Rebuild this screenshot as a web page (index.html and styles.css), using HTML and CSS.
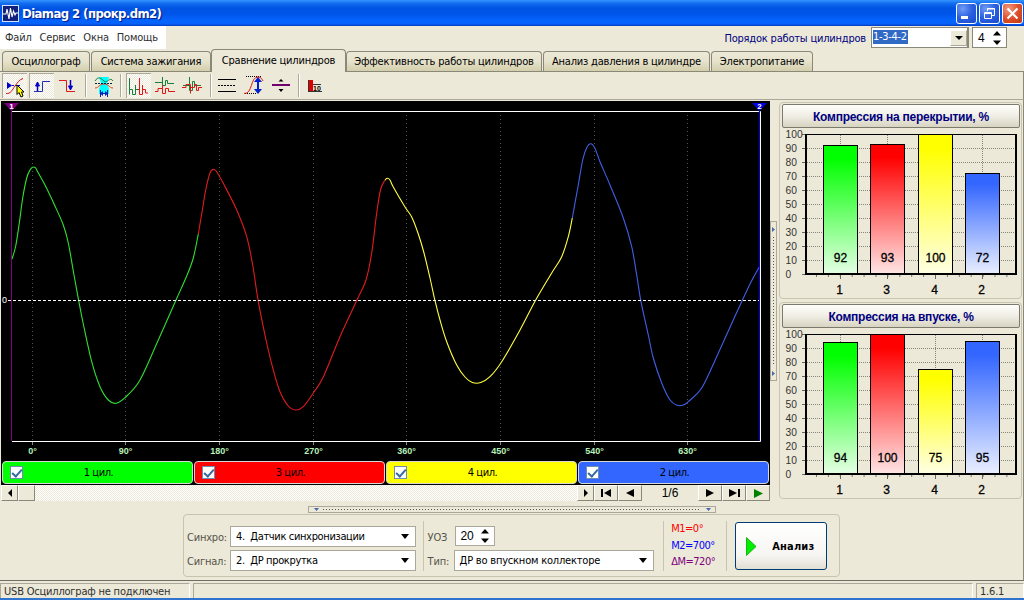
FILE: index.html
```html
<!DOCTYPE html>
<html lang="ru">
<head>
  <meta charset="UTF-8" />
  <title>Diamag 2 (прокр.dm2)</title>
  <link rel="stylesheet" href="styles.css">
</head>
<body>
  <div class="titlebar">
    <svg class="app-icon" width="17" height="17" viewBox="0 0 17 17">
      <rect x="0.5" y="0.5" width="16" height="16" fill="#10207c" stroke="#d8e4ff" />
      <path d="M1 9H4L5 4L7 14L8.500 3L10 12L11.500 6L13 10L14 8H16" fill="none" stroke="#fff" stroke-width="1.100" />
    </svg>
    <span class="title">Diamag 2 (прокр.dm2)</span>
    <div class="win-buttons">
      <div class="win-btn"><svg width="19" height="19"><rect x="4" y="12" width="7" height="3" fill="#fff" /></svg></div>
      <div class="win-btn"><svg width="19" height="19" fill="none" stroke="#fff"><path d="M7.500 7V4.500H14.500V11.500H12M7 5H15" /><path d="M4.500 8.500H11.500V14.500H4.500ZM4 9.500H12" /></svg></div>
      <div class="win-btn close"><svg width="19" height="19"><path d="M4.500 4.500L14.500 14.500M14.500 4.500L4.500 14.500" stroke="#fff" stroke-width="2.200" /></svg></div>
    </div>
  </div>

  <div class="menubar">
    <div class="menu"><span>Файл</span><span>Сервис</span><span>Окна</span><span>Помощь</span></div>
    <div class="order">
      <label>Порядок работы цилиндров</label>
      <div class="order-combo"><span class="selected">1-3-4-2</span><i class="drop"><svg width="8" height="4"><path d="M0 0H8L4 4Z" /></svg></i></div>
      <div class="spin order-spin"><span>4</span><svg width="8" height="14"><path d="M0 4.500L4 0L8 4.500ZM0 9.500H8L4 14Z" /></svg></div>
    </div>
  </div>

  <div class="tabs">
    <div class="tab t1"><span>Осциллограф</span></div>
    <div class="tab t2"><span>Система зажигания</span></div>
    <div class="tab t3 active"><span>Сравнение цилиндров</span></div>
    <div class="tab t4"><span>Эффективность работы цилиндров</span></div>
    <div class="tab t5"><span>Анализ давления в цилиндре</span></div>
    <div class="tab t6"><span>Электропитание</span></div>
  </div>

  <div class="toolbar">
    <div class="tool on"><svg width="25" height="25" fill="none">
      <path d="M6 11.500H17" stroke="#0000c8" stroke-dasharray="2 1" /><path d="M4 8L9 11.500L4 15Z" fill="#0000c8" />
      <path d="M3 19.500C8 20 9 16 12 12S16 6 20 4.500" stroke="#d01010" />
      <path d="M14 11V20.500L16 18.500L18 23L20 22L18.500 18H21Z" fill="#ffff00" stroke="#000" /></svg></div>
    <div class="tool on"><svg width="25" height="25" fill="none" stroke="#0000c8">
      <path d="M4 17.500H12.500V7.500H20" stroke="#2030b0" /><path d="M7.500 17V9" stroke-width="1.500" /><path d="M5.500 12L7.500 8L9.500 12Z" fill="#0000c8" /></svg></div>
    <div class="tool"><svg width="25" height="25" fill="none" stroke="#e01818">
      <path d="M3 7.500H10.500V18.500H19" /><path d="M14.500 7V15" stroke="#0000c8" stroke-width="1.500" /><path d="M12.500 13L14.500 17L16.500 13Z" fill="#0000c8" stroke="#0000c8" /></svg></div>
    <i class="sep"></i>
    <div class="tool"><svg width="25" height="25" fill="none">
      <path d="M7 4H17L15 10L17 16V21H7V16L9 10Z" fill="#00ffff" />
      <path d="M3 8C6 3 9 5 12 8S18 3 21 8" stroke="#118050" /><path d="M3 15C7 15 7 11 12 11S17 15 21 15" stroke="#e04020" />
      <path d="M3 10.500H21" stroke="#002040" stroke-dasharray="2 1" />
      <path d="M9 20.500H15" stroke="#0020c0" /><path d="M8.500 17V24M15.500 17V24" stroke="#0020c0" /><path d="M8 20.500L11 18V23ZM16 20.500L13 18V23Z" fill="#0020c0" /></svg></div>
    <i class="sep after-cyan"></i>
    <div class="tool on"><svg width="25" height="25" fill="none">
      <path d="M2.500 20.500V4V15.500H5.500V20.500H8.500V11V15.500H11" stroke="#18803c" /><path d="M11 15.500H12.500V4V20.500H15.500V11V15.500H18.500V19H21" stroke="#e01818" /></svg></div>
    <div class="tool"><svg width="25" height="25" fill="none">
      <path d="M2 9.500H9.500V4V12.500H12.500V7.500H14.500V10.500H21" stroke="#18803c" /><path d="M2 18.500H5V15.500H9.500V12V20.500H12.500V15.500H15.500V18.500H22" stroke="#e01818" /></svg></div>
    <div class="tool"><svg width="25" height="25" fill="none">
      <path d="M3 12.500H9.500V4V17.500H12.500V8.500H14.500V12.500H21" stroke="#18803c" /><path d="M2 14.500H6V11.500H10.500V20.500M11 14.500H14.500V11.500H16.500V17.500H18.500V14.500H22" stroke="#e01818" /></svg></div>
    <i class="sep before-lines"></i>
    <div class="tool"><svg width="25" height="25" fill="none" stroke="#000">
      <path d="M3 6.500H21M3 18.500H21" /><path d="M3 12.500H21" stroke-dasharray="2 1" /></svg></div>
    <div class="tool"><svg width="25" height="25" fill="none">
      <path d="M4 3.500H19M3 20.500H15" stroke="#000" stroke-dasharray="1 1" /><path d="M2 20.500C11 21 8 4 16 4C19 4 20 6 21 8" stroke="#e01818" />
      <path d="M16 7V18" stroke="#0020d0" stroke-width="2" /><path d="M12 9L16 4L20 9ZM12 16H20L16 21Z" fill="#0020d0" /></svg></div>
    <div class="tool"><svg width="25" height="25">
      <path d="M3 12H21" stroke="#700070" stroke-width="2" /><path d="M9.500 8.500L12 6L14.500 8.500ZM9.500 16H14.500L12 19Z" /></svg></div>
    <i class="sep before-ten"></i>
    <div class="tool"><svg width="25" height="25">
      <path d="M6.500 7V19M6 18.500H20M11 11.500H19" stroke="#333" fill="none" /><rect x="7" y="7" width="4" height="11" fill="#e00000" /><text x="11" y="18" font-family="Liberation Sans" font-size="7" font-weight="bold">10</text></svg></div>
  </div>

  <div class="main">
    <div class="scope">
      <svg id="scopePlot" width="769" height="359" viewBox="1 101 769 359"></svg>
      <div class="channels">
        <div class="channel green"><i class="check"></i><span>1 цил.</span></div>
        <div class="channel red"><i class="check"></i><span>3 цил.</span></div>
        <div class="channel yellow"><i class="check"></i><span>4 цил.</span></div>
        <div class="channel blue"><i class="check"></i><span>2 цил.</span></div>
      </div>
      <div class="pager">
        <div class="pbtn arrow"><svg width="4" height="8"><path d="M4 0V8L0 4Z" /></svg></div>
        <div class="pbtn thumb"></div>
        <div class="track"></div>
        <div class="pbtn arrow"><svg width="4" height="8"><path d="M0 0V8L4 4Z" /></svg></div>
        <div class="pbtn"><svg width="11" height="8"><path d="M0 0H2V8H0ZM10 0V8L3 4Z" /></svg></div>
        <div class="pbtn"><svg width="8" height="8"><path d="M8 0V8L0 4Z" /></svg></div>
        <div class="page">1/6</div>
        <div class="pbtn"><svg width="8" height="8"><path d="M0 0V8L8 4Z" /></svg></div>
        <div class="pbtn"><svg width="11" height="8"><path d="M9 0H11V8H9ZM0 0V8L8 4Z" /></svg></div>
        <div class="pbtn"><svg width="9" height="9"><path d="M0 0V9L9 4.500Z" fill="#008000" /></svg></div>
      </div>
    </div>
    <div class="vsplit"><svg width="7" height="160" viewBox="0 0 7 160">
      <rect x="0.500" y="0.500" width="6" height="159" fill="none" stroke="#aca899" />
      <path d="M2 6V11L5 8.500ZM2 150V155L5 152.500Z" fill="#4868b0" /><path d="M3.500 16V143" stroke="#555" stroke-dasharray="1 2" /></svg></div>
    <div class="side">
      <div class="card">
        <div class="card-title">Компрессия на перекрытии, %</div>
        <svg class="bars" data-values="92,93,100,72" width="241" height="168" viewBox="780 128 241 168"></svg>
      </div>
      <div class="card">
        <div class="card-title">Компрессия на впуске, %</div>
        <svg class="bars" data-values="94,100,75,95" width="241" height="168" viewBox="780 128 241 168"></svg>
      </div>
    </div>
  </div>

  <div class="bottom">
    <svg class="hsplit" width="408" height="7" viewBox="0 0 408 7">
      <rect x="0.500" y="0.500" width="407" height="6" fill="none" stroke="#aca899" />
      <path d="M6 2H11L8.500 5ZM398 2H403L400.500 5Z" fill="#4868b0" /><path d="M15 3.500H392" stroke="#555" stroke-dasharray="1 2" /></svg>
    <div class="group">
      <div class="fields sync">
        <div class="row"><label>Синхро:</label><div class="combo"><span>4.&nbsp; Датчик синхронизации</span><svg width="8" height="5"><path d="M0 0H8L4 5Z" /></svg></div></div>
        <div class="row"><label>Сигнал:</label><div class="combo"><span>2.&nbsp; ДР прокрутка</span><svg width="8" height="5"><path d="M0 0H8L4 5Z" /></svg></div></div>
      </div>
      <div class="fields kind">
        <div class="row"><label>УОЗ</label><div class="spin"><span>20</span><svg width="8" height="14"><path d="M0 4.500L4 0L8 4.500ZM0 9.500H8L4 14Z" /></svg></div></div>
        <div class="row"><label>Тип:</label><div class="combo"><span>ДР во впускном коллекторе</span><svg width="8" height="5"><path d="M0 0H8L4 5Z" /></svg></div></div>
      </div>
      <div class="marks">
        <span class="m1">М1=0°</span>
        <span class="m2">М2=700°</span>
        <span class="dm">ΔМ=720°</span>
      </div>
      <div class="analyze"><svg width="11" height="19"><path d="M0.500 0.500V18.500L10 9.500Z" fill="#00f000" stroke="#20b020" /></svg><span>Анализ</span></div>
    </div>
  </div>

  <div class="status">
    <div class="cell c1">USB Осциллограф не подключен</div>
    <div class="cell c2"></div>
    <div class="cell c3">1.6.1</div>
  </div>
  <script src="script.js"></script>
</body>
</html>
```
FILE: styles.css
```css
* {
  box-sizing: border-box;
}

body {
  margin: 0;
  width: 1024px;
  height: 600px;
  overflow: hidden;
  background: #ece9d8;
  font-family: "DejaVu Sans Condensed", "DejaVu Sans", sans-serif;
  font-stretch: condensed;
  font-size: 11px;
  letter-spacing: -0.2px;
  color: #000;
  display: flex;
  flex-direction: column;
  border-bottom: 2px solid #2f74d0;
}

svg {
  display: block;
  flex: none;
  letter-spacing: 0;
}

span, label {
  white-space: nowrap;
}

/* title bar */
.titlebar {
  height: 26px;
  flex: none;
  display: flex;
  align-items: center;
  padding: 0 1px 0 2px;
  background: linear-gradient(#2f8cfa 0, #2f8cfa 1px, #1470f0 3px, #0054e3 8px, #0055ea 14px, #0565ff 21px, #0560f8 24px, #0038b8 26px);
}

.title {
  margin-left: 3px;
  color: #fff;
  font-weight: bold;
  font-size: 13px;
  letter-spacing: -0.58px;
  text-shadow: 1px 1px 1px #0a1883;
}

.win-buttons {
  margin-left: auto;
  display: flex;
  gap: 2px;
}

.win-btn {
  width: 21px;
  height: 21px;
  border: 1px solid #fff;
  border-radius: 3px;
  background: radial-gradient(circle at 30% 25%, #6f9cf5, #2a5fe0 50%, #1c49cc);
}

.win-btn.close {
  background: radial-gradient(circle at 30% 25%, #f09a80, #e0502c 50%, #c03818);
}

/* menu */
.menubar {
  height: 24px;
  flex: none;
  display: flex;
  justify-content: space-between;
}

.menu {
  width: 166px;
  height: 23px;
  padding-left: 5px;
  background: #fff;
  display: flex;
  gap: 8px;
  line-height: 24px;
  color: #303030;
}

.order {
  display: flex;
  padding: 1px 17px 0 0;
}

.order label {
  color: #000080;
  line-height: 23px;
  margin-right: 5px;
}

.order-combo {
  width: 98px;
  height: 21px;
  border: 1px solid #8a8878;
  border-right-width: 2px;
  background: #fff;
  display: flex;
  justify-content: space-between;
  padding: 2px 0 0 1px;
}

.selected {
  height: 14px;
  width: 35px;
  line-height: 14px;
  background: #316ac5;
  color: #fff;
  letter-spacing: -0.3px;
}

.drop {
  width: 17px;
  height: 16px;
  background: #ece9d8;
  border: 1px solid #fff;
  border-right-color: #aca899;
  border-bottom-color: #aca899;
  display: flex;
  align-items: center;
  justify-content: center;
}

.spin {
  width: 40px;
  height: 20px;
  border: 1px solid #aca899;
  background: #fff;
  display: flex;
  align-items: center;
  justify-content: space-between;
  padding: 0 5px;
  font: 12px "Liberation Sans", Arial, sans-serif;
}

.order-spin {
  width: 35px;
  height: 21px;
  margin-left: 3px;
  border-color: #8a8878;
}

/* tabs */
.tabs {
  height: 22px;
  flex: none;
  display: flex;
  align-items: flex-end;
  padding-left: 2px;
  border-bottom: 1px solid #8a8878;
}

.tab {
  height: 20px;
  border: 1px solid #8a8878;
  border-bottom: none;
  border-radius: 4px 4px 0 0;
  background: linear-gradient(#ece9d8, #e6e2cb 50%, #d3ceab);
  text-align: center;
  line-height: 20px;
  margin-right: 1px;
}

.tab.active {
  height: 23px;
  background: #ece9d8;
  margin: 0 0 -1px -1px;
  line-height: 22px;
}

.t1 { width: 88px; }
.t2 { width: 120px; }
.t3 { width: 135px; }
.t4 { width: 196px; }
.t5 { width: 167px; }
.t6 { width: 102px; }

/* toolbar */
.toolbar {
  height: 28px;
  flex: none;
  display: flex;
  padding: 1px 0 0 2px;
  border-right: 1px solid #8a8878;
  border-bottom: 1px solid #aca899;
}

.tool {
  width: 25px;
  height: 25px;
  margin-right: 2px;
}

.tool.on {
  background: repeating-conic-gradient(#fff 0 25%, #ece9d8 0 50%) 0 0 / 2px 2px;
  border-left: 1px solid #aca899;
  border-top: 1px solid #aca899;
}

.sep {
  width: 2px;
  height: 23px;
  margin: 1px 5px 0 2px;
  border-left: 1px solid #aca899;
  border-right: 1px solid #fff;
}

.sep.after-cyan { margin: 1px 4px 0 1px; }
.sep.before-lines { margin: 1px 3px 0 3px; }
.sep.before-ten { margin: 1px 2px 0 2px; }

/* work area */
.main {
  height: 401px;
  flex: none;
  display: flex;
  padding: 1px 0 0 1px;
  border-right: 1px solid #8a8878;
}

.scope {
  width: 769px;
  flex: none;
  background: #000;
}

.channels {
  height: 25px;
  display: flex;
  gap: 1px;
  padding: 1px 1px 1px 1px;
}

.channel {
  flex: 1;
  height: 23px;
  border: 1px solid #d8d8d8;
  border-radius: 4px;
  display: flex;
  align-items: center;
  padding: 0 9px 0 7px;
}

.channel span {
  flex: 1;
  text-align: center;
  padding-right: 9px;
  letter-spacing: -0.4px;
}

.green { background: #00ff00; }
.red { background: #ff0000; }
.yellow { background: #ffff00; }
.blue { background: #3366ff; }

.check {
  width: 13px;
  height: 13px;
  background: #fff;
  border: 1px solid #6c8cb0;
  display: flex;
  justify-content: center;
}

.check::after {
  content: "";
  width: 4px;
  height: 8px;
  border: solid #3868a0;
  border-width: 0 2px 2px 0;
  transform: rotate(42deg);
}

.pager {
  height: 17px;
  display: flex;
  background: #ece9d8;
}

.pbtn {
  width: 24px;
  height: 16px;
  flex: none;
  display: flex;
  align-items: center;
  justify-content: center;
  background: #ece9d8;
  border: 1px solid #fff;
  border-right-color: #8a8878;
  border-bottom-color: #8a8878;
}

.pbtn.arrow { width: 17px; }
.pbtn.thumb { width: 17px; }

.track {
  flex: 1;
  height: 16px;
  background: repeating-conic-gradient(#fff 0 25%, #ece9d8 0 50%) 0 0 / 2px 2px;
}

.page {
  width: 56px;
  text-align: center;
  font: 12px/17px "Liberation Sans", Arial, sans-serif;
  letter-spacing: 0;
}

.vsplit {
  width: 8px;
  padding-top: 120px;
}

.side {
  width: 243px;
  margin-left: 1px;
  padding-top: 1px;
}

.card {
  height: 197px;
  border: 1px solid #c8c4b0;
  border-radius: 4px;
  margin-bottom: 3px;
}

.card-title {
  width: 238px;
  height: 24px;
  margin: 1px 0 0 2px;
  border: 1px solid #7c7a6c;
  border-radius: 2px;
  background: linear-gradient(#fdfdfb, #f0eee4 50%, #d8d4c2);
  color: #000080;
  font: bold 12px/24px "Liberation Sans", Arial, sans-serif;
  letter-spacing: -0.23px;
  text-align: center;
}

/* settings under the plot */
.bottom {
  height: 80px;
  flex: none;
  padding-top: 5px;
  border-right: 1px solid #8a8878;
  border-bottom: 1px solid #716f64;
}

.hsplit {
  margin-left: 308px;
}

.group {
  width: 657px;
  height: 63px;
  margin: 1px 0 0 183px;
  border: 1px solid #c8c4b0;
  border-radius: 4px;
  display: flex;
  align-items: flex-start;
  padding: 6px 12px 0 3px;
}

.fields {
  display: flex;
  flex-direction: column;
  gap: 3px;
  padding-top: 5px;
}

.row {
  display: flex;
  height: 21px;
}

.row label {
  color: #55534a;
  line-height: 23px;
}

.sync { width: 236px; }
.sync label { width: 43px; }
.sync .combo { width: 186px; }

.kind {
  width: 241px;
  height: 50px;
  border-left: 1px solid #c8c4b0;
  padding-left: 4px;
}

.kind label { width: 26px; }
.kind .combo { width: 200px; }
.kind .spin { margin-left: 1px; }

.combo {
  height: 21px;
  border: 1px solid #aca899;
  background: #fff;
  display: flex;
  align-items: center;
  justify-content: space-between;
  padding: 0 6px 0 5px;
}

.sync .combo {
  letter-spacing: -0.35px;
}

.marks {
  width: 64px;
  height: 50px;
  border-left: 1px solid #c8c4b0;
  border-right: 1px solid #c8c4b0;
  padding-left: 7px;
  display: flex;
  flex-direction: column;
  line-height: 16.500px;
  letter-spacing: -0.5px;
}

.m1 { color: #ff0000; }
.m2 { color: #0000ff; }
.dm { color: #800080; }

.analyze {
  width: 92px;
  height: 48px;
  margin: 1px 0 0 8px;
  border: 1px solid #003c74;
  border-radius: 3px;
  background: linear-gradient(#fff, #f6f5f2 70%, #e2dfd3);
  display: flex;
  align-items: center;
  padding-left: 10px;
  font-weight: bold;
  letter-spacing: 0.2px;
}

.analyze span {
  margin: 1px 0 0 15px;
}

/* status bar */
.status {
  flex: 1;
  display: flex;
  gap: 3px;
  padding-top: 2px;
  line-height: 16px;
}

.cell {
  border: 1px solid #aca899;
  border-bottom: none;
  border-right-color: #fff;
  padding-left: 3px;
  white-space: nowrap;
  color: #303030;
}

.c1 { width: 190px; }
.c2 { flex: 1; }
.c3 { width: 48px; }
```
FILE: script.js
```js
// piecewise curve data, one entry per cylinder
const traces = [
  { color: "#30e030", pts: [[12,259],[15.7,246],[19.3,223],[22.7,198],[26.7,178],[30,170],[32.7,167.3],[35.3,167.7],[38.3,173],[45,185],[55,206],[63.3,225],[68.3,243],[74,275],[78.7,300.7],[83.3,324],[91.7,361.7],[100,386.7],[108.3,400],[116,403.3],[125,397.7],[140,380],[158.3,340],[175.7,300.7],[186.7,276],[193.3,258],[198.3,234]] },
  { color: "#e01c1c", pts: [[198.3,234],[202.7,208],[205.7,190],[210,173],[213.7,169.3],[217.3,172.7],[223.3,183.3],[236.7,210],[246.7,236.7],[252.7,265],[256.7,291.7],[260,310.7],[266.7,343],[273.3,370],[280,391.7],[288.3,406],[295.7,410],[303.3,406.7],[313.3,393],[323.3,377],[340,336.7],[357.3,299.3],[366,280],[371.7,253],[376.7,213],[380.7,189],[385,180]] },
  { color: "#ffff40", pts: [[385,180],[387.3,178.3],[390,180],[393.3,187],[405,207],[411.7,217],[418.3,234],[424,253],[430,278],[435,300.7],[440,320],[446.7,341.7],[456.7,365],[465,377],[472.3,382.5],[480.7,382.5],[490,376.7],[501.7,361.7],[520,330],[535.7,300],[551.7,273],[561.7,256.7],[568.3,236.7],[572.3,218]] },
  { color: "#4060e8", pts: [[572.3,218],[575,203],[578.3,185],[582.7,160],[586.7,147.7],[590.7,143.7],[594.7,147.7],[600,161.7],[610,185],[623.3,218],[631.7,246.7],[636.7,275],[641,301.7],[648.3,335],[653.3,358],[661.7,383],[670,400],[677.3,405.3],[683.3,405],[688.3,401.7],[701.7,388],[716.7,356.7],[733.3,320],[750,284],[759.3,267]] }
];

function smooth(p) {
  let d = `M${p[0]}`;
  for (let i = 0; i < p.length - 1; i++) {
    const a = p[i - 1] || p[i], b = p[i], c = p[i + 1], e = p[i + 2] || c;
    d += `C${b[0] + (c[0] - a[0]) / 6} ${b[1] + (c[1] - a[1]) / 6} ${c[0] - (e[0] - b[0]) / 6} ${c[1] - (e[1] - b[1]) / 6} ${c[0]} ${c[1]}`;
  }
  return d;
}

function drawScope() {
  let s = "";
  [32, 125, 219, 313, 406, 500, 594, 687].forEach((x, i) => {
    s += `<path d="M${x + 0.5} 115V440" stroke="#505050" stroke-dasharray="1 3"/>`;
    s += `<path d="M${x + 0.5} 442V445" stroke="#888"/>`;
    s += `<text x="${x + 0.5}" y="454" text-anchor="middle" font-family="Liberation Sans" font-size="9" font-weight="bold" fill="#b8f0b8">${i * 90}°</text>`;
  });
  traces.forEach(t => {
    s += `<path d="${smooth(t.pts)}" fill="none" stroke="${t.color}" stroke-width="1.1"/>`;
  });
  s += `<path d="M12 111.500H760.500V441.500H12" fill="none" stroke="#fff"/>`;
  s += `<path d="M8 300.500H760" stroke="#fff" stroke-dasharray="3 2"/>`;
  s += `<text x="2" y="303" font-family="Liberation Sans" font-size="9" fill="#fff">0</text>`;
  s += `<path d="M11.500 108V441" stroke="#800080"/><path d="M4 103H19L11.500 111Z" fill="#800080"/>`;
  s += `<path d="M759.500 108V441" stroke="#0000e0"/><path d="M752 103H767L759.500 111Z" fill="#0000e0"/>`;
  s += `<g font-family="Liberation Sans" font-size="8" font-weight="bold" fill="#fff" text-anchor="middle"><text x="11.500" y="109">1</text><text x="759.500" y="109">2</text></g>`;
  document.getElementById("scopePlot").innerHTML = s;
}

function drawBars(svg, n) {
  const colors = ["#00ff00", "#ff0000", "#ffff00", "#3366ff"];
  const names = [1, 3, 4, 2];
  const lefts = [823, 870, 918, 965];
  const values = svg.dataset.values.split(",").map(Number);
  let s = `<defs>`;
  colors.forEach((c, i) => {
    s += `<linearGradient id="g${n}${i}" x2="0" y2="1"><stop offset="0.1" stop-color="${c}"/><stop offset="1" stop-color="${c}" stop-opacity="0.1"/></linearGradient>`;
  });
  s += `</defs><g font-family="Liberation Sans" font-size="11" fill="#333">`;
  for (let v = 0; v <= 100; v += 10) {
    const y = 274.5 - v * 1.4;
    if (v > 0 && v < 100) s += `<path d="M807 ${y}H1015" stroke="#88867a" stroke-dasharray="1 1"/>`;
    s += `<path d="M802 ${y}H806" stroke="#666"/>`;
    const w = String(v).length * 5.7;
    s += `<text x="785.5" y="${y + 3.5}" textLength="${w}" lengthAdjust="spacingAndGlyphs">${v}</text>`;
  }
  s += `</g>`;
  for (let x = 816.5; x < 1014; x += 11.9) s += `<path d="M${x} 275V277" stroke="#777"/>`;
  lefts.forEach(x => {
    s += `<path d="M${x + 17.5} 135V273" stroke="#88867a" stroke-dasharray="1 1"/><path d="M${x + 17.5} 275V279" stroke="#666"/>`;
  });
  s += `<path d="M1016 134V275M806 134V275" stroke="#000" stroke-width="2"/>`;
  values.forEach((v, i) => {
    const h = Math.round(v * 1.4), x = lefts[i] + 0.5;
    s += `<rect x="${x}" y="${274.5 - h}" width="34" height="${h}" fill="#fff"/>`;
    s += `<rect x="${x}" y="${274.5 - h}" width="34" height="${h}" fill="url(#g${n}${i})" stroke="#000"/>`;
    s += `<g font-family="Liberation Sans" font-size="12" text-anchor="middle"><text x="${x + 17}" y="262" stroke="#000" stroke-width="0.3">${v}</text><text x="${x + 16}" y="294" stroke="#000" stroke-width="0.3">${names[i]}</text></g>`;
  });
  s += `<path d="M805 134.500H1017" stroke="#000"/><path d="M805 274H1017" stroke="#000" stroke-width="2"/>`;
  svg.innerHTML = s;
}

drawScope();
document.querySelectorAll(".bars").forEach(drawBars);
```
